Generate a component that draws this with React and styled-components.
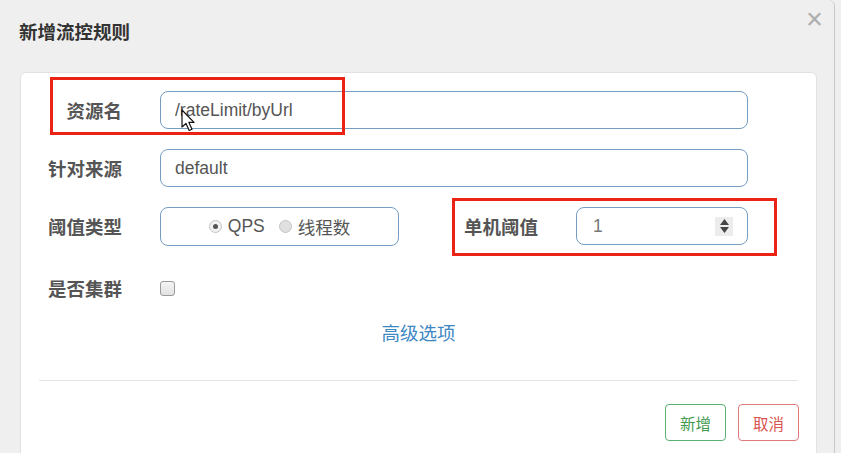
import React, { useState } from 'react';
import styled, { createGlobalStyle } from 'styled-components';

const GlobalStyle = createGlobalStyle`
  html, body {
    margin: 0;
    padding: 0;
    background: #efefef;
    font-family: "Liberation Sans", "Noto Sans CJK SC", sans-serif;
  }
`;

const Dialog = styled.div`
  width: 835px;
  height: 453px;
  background: #efefef;
  border-right: 1px solid #c9c9c9;
  border-top-right-radius: 6px;
  overflow: hidden;
  box-sizing: border-box;
`;

const Header = styled.div`
  height: 72px;
  display: flex;
  align-items: flex-start;
  justify-content: space-between;
  padding: 0 11px 0 19px;
  box-sizing: border-box;
`;

const Title = styled.h4`
  margin: 22px 0 0;
  font-size: 18.5px;
  line-height: 22px;
  font-weight: bold;
  color: #333;
`;

const Close = styled.button`
  margin-top: 5px;
  padding: 0;
  border: 0;
  background: none;
  font-family: "Liberation Sans", sans-serif;
  font-size: 29px;
  line-height: 28px;
  font-weight: normal;
  color: #adadad;
  cursor: pointer;
`;

const Card = styled.div`
  margin: 0 17px 0 20px;
  min-height: 420px;
  background: #fff;
  border: 1px solid #e2e2e2;
  border-radius: 6px;
  padding-top: 18px;
  box-sizing: border-box;
  display: flex;
  flex-direction: column;
`;

const Row = styled.div`
  position: relative;
  display: flex;
  align-items: center;
  height: 38px;
  margin-bottom: 20px;
  margin-top: ${(p) => p.$top || 0}px;
`;

const Label = styled.label`
  width: ${(p) => p.$w}px;
  flex: none;
  text-align: right;
  font-size: 18.5px;
  font-weight: bold;
  color: #555;
  margin-right: 38px;
`;

const Input = styled.input`
  width: ${(p) => p.$w}px;
  height: 38px;
  box-sizing: border-box;
  border: 1px solid #779ec2;
  border-radius: 8px;
  padding: 0 14px;
  font-family: "Liberation Sans", "Noto Sans CJK SC", sans-serif;
  font-size: 17.5px;
  color: #555;
  outline: none;
`;

const RadioBox = styled.div`
  width: 239px;
  height: 39px;
  box-sizing: border-box;
  border: 1px solid #779ec2;
  border-radius: 8px;
  display: flex;
  align-items: center;
  justify-content: center;
  gap: 14px;
  margin-right: 40px;
`;

const RadioItem = styled.span`
  display: flex;
  align-items: center;
  gap: 6px;
  font-size: 17.5px;
  color: #555;
  cursor: pointer;
`;

const Dot = styled.span`
  width: 13px;
  height: 13px;
  border-radius: 50%;
  box-sizing: border-box;
  border: 1px solid #c4c4c4;
  background: ${(p) => (p.$on ? '#f2f2f2' : '#e0e0e0')};
  display: flex;
  align-items: center;
  justify-content: center;
  &::after {
    content: '';
    width: 5px;
    height: 5px;
    border-radius: 50%;
    background: ${(p) => (p.$on ? '#555' : 'transparent')};
  }
`;

const NumberBox = styled.div`
  width: 172px;
  height: 38px;
  box-sizing: border-box;
  border: 1px solid #779ec2;
  border-radius: 8px;
  display: flex;
  align-items: center;
  padding: 0 14px 0 16px;
  font-size: 17.5px;
  color: #777;
  justify-content: space-between;
`;

const Spinner = styled.span`
  width: 18px;
  height: 19px;
  background: #ececec;
  display: flex;
  flex-direction: column;
  align-items: center;
  justify-content: center;
  gap: 2px;
`;

const Check = styled.span`
  width: 13px;
  height: 13px;
  border: 1px solid #9a9a9a;
  border-radius: 3px;
  background: linear-gradient(#f4f4f4, #e2e2e2);
`;

const LinkRow = styled.div`
  text-align: center;
  margin-top: -3px;
`;

const AdvLink = styled.a`
  font-size: 18.5px;
  line-height: 20px;
  color: #3d87c3;
  cursor: pointer;
`;

const Divider = styled.hr`
  margin: 36px 18px 0 18px;
  border: 0;
  border-top: 1px solid #e4e4e4;
`;

const Footer = styled.div`
  display: flex;
  justify-content: flex-end;
  gap: 12px;
  padding: 23px 17px 0 0;
`;

const Btn = styled.button`
  width: 61px;
  height: 37px;
  background: #fff;
  border: 1px solid ${(p) => p.$color};
  border-radius: 4px;
  color: ${(p) => p.$text};
  font-family: "Liberation Sans", "Noto Sans CJK SC", sans-serif;
  font-size: 15.5px;
  cursor: pointer;
`;

const Marker = styled.div`
  position: absolute;
  left: ${(p) => p.$x}px;
  top: ${(p) => p.$y}px;
  width: ${(p) => p.$w}px;
  height: 58px;
  box-sizing: border-box;
  border: 3px solid #ea2315;
  pointer-events: none;
`;

const Cursor = styled.svg`
  position: absolute;
  left: 160px;
  top: 18px;
  pointer-events: none;
`;

export default function App() {
  const [mode, setMode] = useState('qps');
  const [cluster, setCluster] = useState(false);

  return (
    <>
      <GlobalStyle />
      <Dialog>
        <Header>
          <Title>新增流控规则</Title>
          <Close>×</Close>
        </Header>
        <Card>
          <Row>
            <Label $w={101}>资源名</Label>
            <Input $w={588} defaultValue="/rateLimit/byUrl" />
            <Marker $x={29} $y={-14} $w={295} />
            <Cursor width="16" height="24" viewBox="0 0 16 24">
              <path d="M1 1 L1 18 L5 14.5 L8.2 21.5 L11 20.2 L7.9 13.4 L13 13.4 Z" fill="#fff" stroke="#111" strokeWidth="1.2" strokeLinejoin="round" />
            </Cursor>
          </Row>
          <Row>
            <Label $w={101}>针对来源</Label>
            <Input $w={588} defaultValue="default" />
          </Row>
          <Row>
            <Label $w={101}>阈值类型</Label>
            <RadioBox>
              <RadioItem onClick={() => setMode('qps')}>
                <Dot $on={mode === 'qps'} />QPS
              </RadioItem>
              <RadioItem onClick={() => setMode('thread')}>
                <Dot $on={mode === 'thread'} />线程数
              </RadioItem>
            </RadioBox>
            <Label $w={99}>单机阈值</Label>
            <NumberBox>
              1
              <Spinner>
                <svg width="9" height="6" viewBox="0 0 9 6"><path d="M4.5 0 L9 6 L0 6 Z" fill="#444" /></svg>
                <svg width="9" height="6" viewBox="0 0 9 6"><path d="M0 0 L9 0 L4.5 6 Z" fill="#444" /></svg>
              </Spinner>
            </NumberBox>
            <Marker $x={431} $y={-9} $w={325} />
          </Row>
          <Row $top={4}>
            <Label $w={101}>是否集群</Label>
            <Check onClick={() => setCluster(!cluster)} />
          </Row>
          <LinkRow>
            <AdvLink>高级选项</AdvLink>
          </LinkRow>
          <Divider />
          <Footer>
            <Btn $color="#5cb270" $text="#3f9a4f">新增</Btn>
            <Btn $color="#df7a78" $text="#d9534f">取消</Btn>
          </Footer>
        </Card>
      </Dialog>
    </>
  );
}
